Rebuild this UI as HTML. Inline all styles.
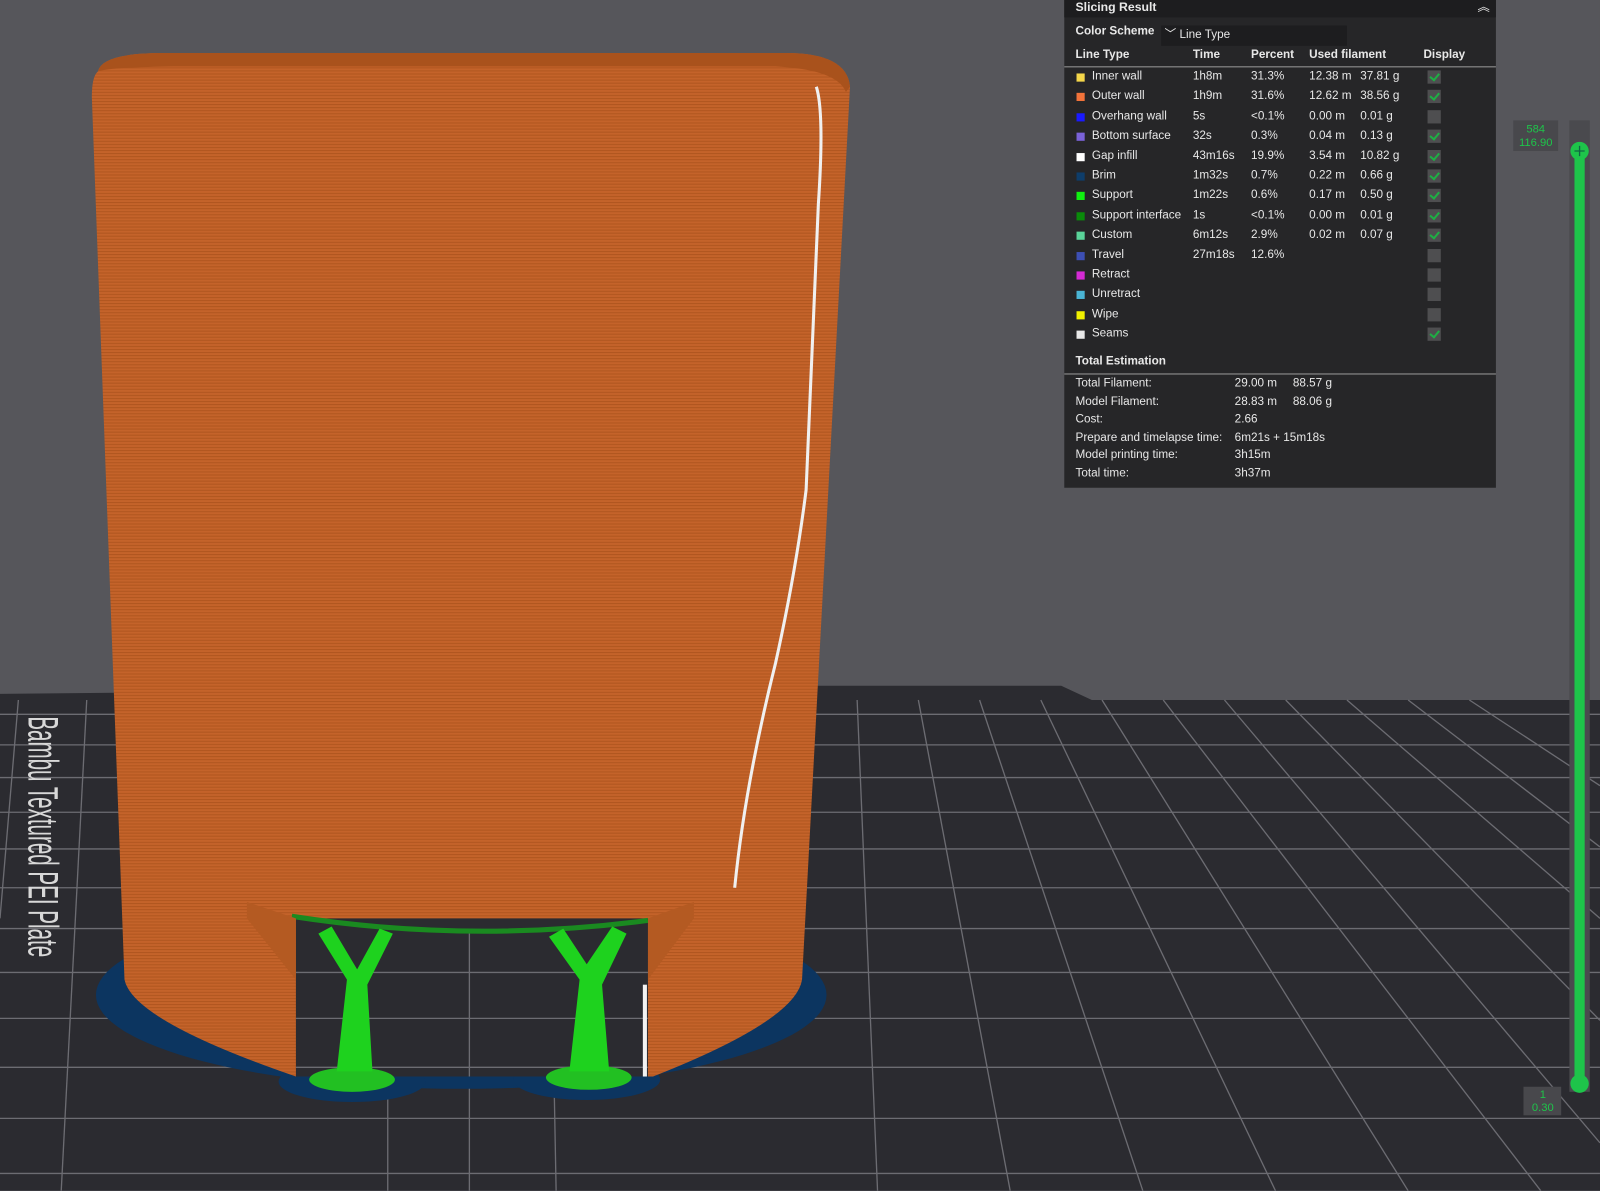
<!DOCTYPE html>
<html><head><meta charset="utf-8"><style>
html,body{margin:0;padding:0;background:#56565b;overflow:hidden;width:1600px;height:1191px}
#w{position:absolute;left:0;top:0;width:1568px;height:1167px;transform:scale(1.0204);transform-origin:0 0;font-family:"Liberation Sans",sans-serif}
#p{position:absolute;left:1043px;top:0;width:423px;height:478px;background:#262628;color:#e8e8e8;font-size:11.5px}
#p .hd{height:17px;background:#1d1d1f;font-weight:bold;padding-left:11px;line-height:15px;font-size:12px}
.r{position:absolute;left:0;height:19px;line-height:19px;width:423px}
.r span{position:absolute}
.sw{width:8px;height:8px;top:6px;left:12px}
.cb{left:356px;top:3px;width:13px;height:13px;background:#4e4e50}
.cb.on:after{content:"";position:absolute;left:4px;top:1px;width:4px;height:7px;border:solid #1fae44;border-width:0 2px 2px 0;transform:rotate(40deg)}
.b{font-weight:bold}
</style></head><body><div id="w">
<svg width="1568" height="1167" style="position:absolute;left:0;top:0">
<defs>
<pattern id="st" width="4" height="3" patternUnits="userSpaceOnUse"><rect width="4" height="3" fill="#c4632a"/><rect width="4" height="1" fill="#b0561f"/></pattern>
</defs>
<rect width="1568" height="1167" fill="#56565b"/>
<polygon points="0,680 800,672 1040,672 1070,686 1568,686 1568,1167 0,1167" fill="#2b2b30"/>
<g stroke="#6c6c72" stroke-width="1.3" fill="none">
<line x1="0" y1="700" x2="1568" y2="700"/><line x1="0" y1="730" x2="1568" y2="730"/><line x1="0" y1="762" x2="1568" y2="762"/><line x1="0" y1="796" x2="1568" y2="796"/><line x1="0" y1="832" x2="1568" y2="832"/><line x1="0" y1="870" x2="1568" y2="870"/><line x1="0" y1="910" x2="1568" y2="910"/><line x1="0" y1="953" x2="1568" y2="953"/><line x1="0" y1="998" x2="1568" y2="998"/><line x1="0" y1="1046" x2="1568" y2="1046"/><line x1="0" y1="1096" x2="1568" y2="1096"/><line x1="0" y1="1150" x2="1568" y2="1150"/>
<line x1="18" y1="686" x2="0" y2="900"/><line x1="85" y1="686" x2="60" y2="1167"/><line x1="840" y1="686" x2="860" y2="1167"/><line x1="900" y1="686" x2="990" y2="1167"/><line x1="960" y1="686" x2="1120" y2="1167"/><line x1="1020" y1="686" x2="1250" y2="1167"/><line x1="1080" y1="686" x2="1380" y2="1167"/><line x1="1140" y1="686" x2="1510" y2="1167"/><line x1="1200" y1="686" x2="1568" y2="1120"/><line x1="1260" y1="686" x2="1568" y2="1000"/><line x1="1320" y1="686" x2="1568" y2="900"/><line x1="1380" y1="686" x2="1568" y2="830"/><line x1="1440" y1="686" x2="1568" y2="770"/>
<line x1="380" y1="900" x2="380" y2="1167"/><line x1="460" y1="900" x2="460" y2="1167"/><line x1="540" y1="900" x2="545" y2="1167"/>
</g>
<text transform="translate(28,702) rotate(90) scale(0.72,1.5)" fill="#d8d8d8" font-size="28" font-family="Liberation Sans,sans-serif">Bambu Textured PEI Plate</text>
<ellipse cx="452" cy="975" rx="358" ry="92" fill="#0c3560"/>
<ellipse cx="345" cy="1060" rx="72" ry="20" fill="#0c3560"/><ellipse cx="575" cy="1058" rx="72" ry="20" fill="#0c3560"/>
<path d="M96,70 Q100,52 160,52 L770,52 Q830,52 833,85 L786,960 Q780,1000 640,1055 L290,1055 Q130,1000 122,960 L90,95 Q90,75 96,70 Z" fill="url(#st)"/>
<path d="M96,70 Q100,52 160,52 L770,52 Q830,52 833,85 L829,90 Q820,68 760,65 L170,65 Q105,66 96,70Z" fill="#a9521c"/>
<path d="M290,900 L635,900 L635,1055 L290,1055 Z" fill="#2b2b30"/>
<g stroke="#6c6c72" stroke-width="1.3"><line x1="290" y1="953" x2="635" y2="953"/><line x1="290" y1="998" x2="635" y2="998"/><line x1="290" y1="1046" x2="635" y2="1046"/><line x1="460" y1="910" x2="460" y2="1055"/></g>
<path d="M286,898 Q460,925 635,902" stroke="#1a8a20" stroke-width="5" fill="none"/>
<polygon points="242,884 290,900 290,960 242,900" fill="#b45a22"/>
<polygon points="680,884 635,900 635,960 680,900" fill="#b45a22"/>
<ellipse cx="345" cy="1058" rx="42" ry="12" fill="#22c022"/><ellipse cx="577" cy="1056" rx="42" ry="12" fill="#22c022"/>
<path d="M330,1050 L340,960 L312,915 L325,908 L350,950 L372,910 L385,915 L360,965 L365,1050Z" fill="#1ed21e"/>
<path d="M558,1050 L568,960 L538,918 L552,910 L575,945 L600,908 L614,915 L590,965 L597,1050Z" fill="#1ed21e"/>
<rect x="630" y="965" width="4" height="90" fill="#f2f2f2"/>
<path d="M800,85 Q808,110 802,200 L790,480 Q780,560 760,650 Q730,770 720,870" stroke="#f0f0f0" stroke-width="3" fill="none"/>
<rect x="1538" y="118" width="20" height="952" fill="#4a4a4e"/>
<rect x="1543" y="148" width="10" height="914" fill="#1ec44a"/>
<circle cx="1548" cy="148" r="9" fill="#1ec44a"/><path d="M1543,148h10M1548,143v10" stroke="#164" stroke-width="1.3"/>
<circle cx="1548" cy="1062" r="9" fill="#1ec44a"/>
<rect x="1483" y="118" width="44" height="30" fill="#48484c"/>
<text x="1505" y="130" fill="#1ec44a" font-size="11" text-anchor="middle">584</text><text x="1505" y="143" fill="#1ec44a" font-size="11" text-anchor="middle">116.90</text>
<rect x="1493" y="1065" width="37" height="28" fill="#48484c"/>
<text x="1512" y="1076" fill="#1ec44a" font-size="11" text-anchor="middle">1</text><text x="1512" y="1089" fill="#1ec44a" font-size="11" text-anchor="middle">0.30</text>
</svg>
<div id="p">
<div class="hd">Slicing Result<span style="position:absolute;right:6px;top:0;font-weight:normal">︽</span></div>
<div class="r b" style="top:22px"><span style="left:11px">Color Scheme</span><span style="left:95px;top:3px;height:20px;width:182px;background:#1d1d1f;line-height:19px;font-weight:normal">&nbsp;﹀ Line Type</span></div>
<div class="r b" style="top:45px"><span style="left:11px">Line Type</span><span style="left:126px">Time</span><span style="left:183px">Percent</span><span style="left:240px">Used filament</span><span style="left:352px">Display</span></div>
<div style="position:absolute;left:0;top:65px;width:423px;height:1px;background:#999"></div>
<div class="r" style="top:66px"><span class="sw" style="background:#f4d64a"></span><span style="left:27px">Inner wall</span><span style="left:126px">1h8m</span><span style="left:183px">31.3%</span><span style="left:240px">12.38 m</span><span style="left:290px">37.81 g</span><span class="cb on"></span></div>
<div class="r" style="top:85.4px"><span class="sw" style="background:#f2733a"></span><span style="left:27px">Outer wall</span><span style="left:126px">1h9m</span><span style="left:183px">31.6%</span><span style="left:240px">12.62 m</span><span style="left:290px">38.56 g</span><span class="cb on"></span></div>
<div class="r" style="top:104.8px"><span class="sw" style="background:#1a1aff"></span><span style="left:27px">Overhang wall</span><span style="left:126px">5s</span><span style="left:183px">&lt;0.1%</span><span style="left:240px">0.00 m</span><span style="left:290px">0.01 g</span><span class="cb"></span></div>
<div class="r" style="top:124.2px"><span class="sw" style="background:#7a62d8"></span><span style="left:27px">Bottom surface</span><span style="left:126px">32s</span><span style="left:183px">0.3%</span><span style="left:240px">0.04 m</span><span style="left:290px">0.13 g</span><span class="cb on"></span></div>
<div class="r" style="top:143.6px"><span class="sw" style="background:#fff"></span><span style="left:27px">Gap infill</span><span style="left:126px">43m16s</span><span style="left:183px">19.9%</span><span style="left:240px">3.54 m</span><span style="left:290px">10.82 g</span><span class="cb on"></span></div>
<div class="r" style="top:163px"><span class="sw" style="background:#0e3d6a"></span><span style="left:27px">Brim</span><span style="left:126px">1m32s</span><span style="left:183px">0.7%</span><span style="left:240px">0.22 m</span><span style="left:290px">0.66 g</span><span class="cb on"></span></div>
<div class="r" style="top:182.4px"><span class="sw" style="background:#10f010"></span><span style="left:27px">Support</span><span style="left:126px">1m22s</span><span style="left:183px">0.6%</span><span style="left:240px">0.17 m</span><span style="left:290px">0.50 g</span><span class="cb on"></span></div>
<div class="r" style="top:201.8px"><span class="sw" style="background:#0a8a0a"></span><span style="left:27px">Support interface</span><span style="left:126px">1s</span><span style="left:183px">&lt;0.1%</span><span style="left:240px">0.00 m</span><span style="left:290px">0.01 g</span><span class="cb on"></span></div>
<div class="r" style="top:221.2px"><span class="sw" style="background:#5ad49a"></span><span style="left:27px">Custom</span><span style="left:126px">6m12s</span><span style="left:183px">2.9%</span><span style="left:240px">0.02 m</span><span style="left:290px">0.07 g</span><span class="cb on"></span></div>
<div class="r" style="top:240.6px"><span class="sw" style="background:#3d4fb4"></span><span style="left:27px">Travel</span><span style="left:126px">27m18s</span><span style="left:183px">12.6%</span><span class="cb"></span></div>
<div class="r" style="top:260px"><span class="sw" style="background:#d42ad4"></span><span style="left:27px">Retract</span><span class="cb"></span></div>
<div class="r" style="top:279.4px"><span class="sw" style="background:#4ab4d4"></span><span style="left:27px">Unretract</span><span class="cb"></span></div>
<div class="r" style="top:298.8px"><span class="sw" style="background:#f0f000"></span><span style="left:27px">Wipe</span><span class="cb"></span></div>
<div class="r" style="top:318.2px"><span class="sw" style="background:#e8e8e8"></span><span style="left:27px">Seams</span><span class="cb on"></span></div>
<div class="r b" style="top:345px"><span style="left:11px">Total Estimation</span></div>
<div style="position:absolute;left:0;top:366px;width:423px;height:1px;background:#999"></div>
<div class="r" style="top:367px"><span style="left:11px">Total Filament:</span><span style="left:167px">29.00 m</span><span style="left:224px">88.57 g</span></div>
<div class="r" style="top:384.5px"><span style="left:11px">Model Filament:</span><span style="left:167px">28.83 m</span><span style="left:224px">88.06 g</span></div>
<div class="r" style="top:402px"><span style="left:11px">Cost:</span><span style="left:167px">2.66</span></div>
<div class="r" style="top:419.5px"><span style="left:11px">Prepare and timelapse time:</span><span style="left:167px">6m21s + 15m18s</span></div>
<div class="r" style="top:437px"><span style="left:11px">Model printing time:</span><span style="left:167px">3h15m</span></div>
<div class="r" style="top:454.5px"><span style="left:11px">Total time:</span><span style="left:167px">3h37m</span></div>
</div>
</div></body></html>
